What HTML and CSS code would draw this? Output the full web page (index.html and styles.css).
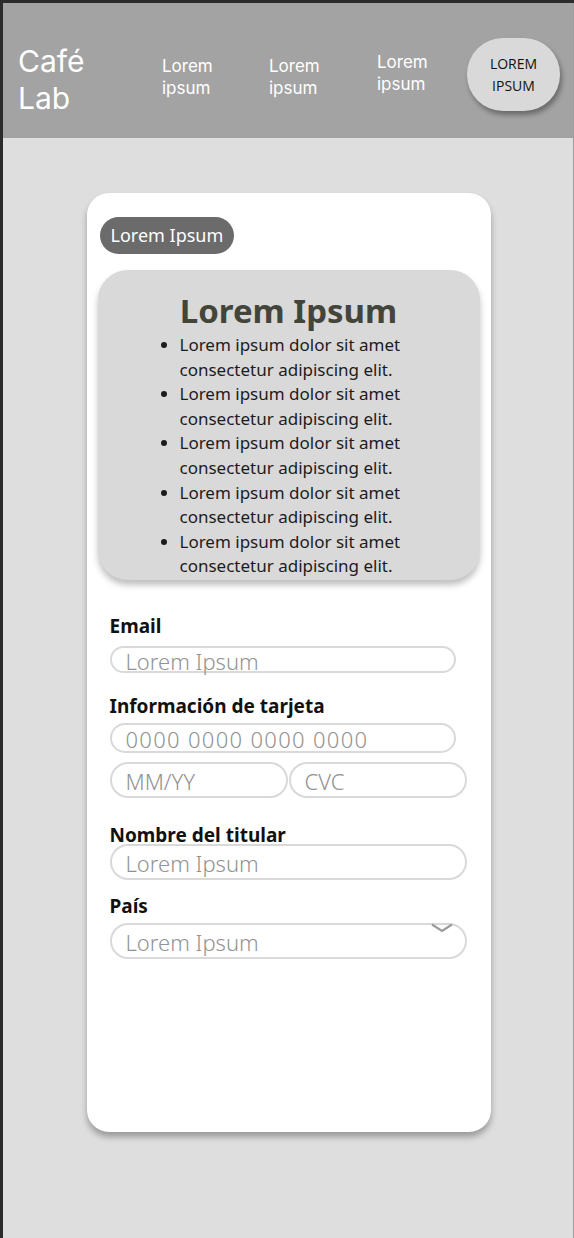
FILE: index.html
```html
<!DOCTYPE html>
<html lang="es">
<head>
<meta charset="utf-8">
<title>Café Lab</title>
<link rel="stylesheet" href="styles.css">
</head>
<body>
<div class="frame">
  <header class="topbar">
    <div class="logo">Café<br>Lab</div>
    <nav class="nav">
      <a class="nav-item w1">Lorem<br>ipsum</a>
      <a class="nav-item w2">Lorem<br>ipsum</a>
      <a class="nav-item w3 raised">Lorem<br>ipsum</a>
    </nav>
    <button class="cta">LOREM<br>IPSUM</button>
  </header>

  <div class="content">
  <main class="card">
    <span class="badge">Lorem Ipsum</span>
    <section class="summary">
      <h1 class="summary-title">Lorem Ipsum</h1>
      <ul class="summary-list">
        <li>Lorem ipsum dolor sit amet<br>consectetur adipiscing elit.</li>
        <li>Lorem ipsum dolor sit amet<br>consectetur adipiscing elit.</li>
        <li>Lorem ipsum dolor sit amet<br>consectetur adipiscing elit.</li>
        <li>Lorem ipsum dolor sit amet<br>consectetur adipiscing elit.</li>
        <li>Lorem ipsum dolor sit amet<br>consectetur adipiscing elit.</li>
      </ul>
    </section>

    <form class="form">
      <label class="label l-email">Email</label>
      <div class="field f-email">Lorem Ipsum</div>

      <label class="label l-card">Información de tarjeta</label>
      <div class="field f-card">0000 0000 0000 0000</div>
      <div class="row">
        <div class="field f-half">MM/YY</div>
        <div class="field f-half">CVC</div>
      </div>

      <label class="label l-name">Nombre del titular</label>
      <div class="field f-wide">Lorem Ipsum</div>

      <label class="label l-country">País</label>
      <div class="field f-wide f-select">Lorem Ipsum
        <svg class="chevron" width="22" height="10" viewBox="0 0 22 10"><path d="M1 1.5 L11 8 L21 1.5" fill="none" stroke="#9b9b9b" stroke-width="2.2"/></svg>
      </div>
    </form>
  </main>
  </div>
</div>
</body>
</html>
```

FILE: styles.css
```css
* { box-sizing: border-box; }
html, body { margin: 0; padding: 0; }
body {
  background: #2b2b2b;
  font-family: "Noto Sans", "Lato", sans-serif;
}
.frame {
  margin: 3px 0 0 3px;
  background: #dedede;
  border-right: 1px solid #9d9d9d;
  min-height: 1235px;
  padding-bottom: 40px;
}
.topbar {
  height: 135px;
  background: #a3a3a3;
  display: flex;
  align-items: flex-start;
  padding: 0 0 0 15px;
}
.logo {
  width: 144px;
  margin-top: 40px;
  color: #ffffff;
  font-family: "Inter", sans-serif;
  font-weight: 400;
  font-size: 30px;
  line-height: 37px;
}
.nav { display: flex; align-items: flex-start; }
.nav-item {
  margin-top: 53px;
  color: #ffffff;
  font-family: "Inter", sans-serif;
  font-weight: 400;
  font-size: 17px;
  line-height: 21.5px;
  text-decoration: none;
}
.w1 { width: 107px; }
.w2 { width: 108px; }
.w3 { width: 90px; }
.nav-item.raised { margin-top: 49px; }
.cta {
  margin-top: 35px;
  width: 93px;
  height: 73px;
  border: none;
  border-radius: 36px;
  background: #d9d9d9;
  box-shadow: 2px 4px 5px rgba(0,0,0,0.35);
  font-family: "Open Sans", sans-serif;
  font-size: 14px;
  line-height: 22px;
  color: #111;
  padding: 0;
}

.content { padding-left: 1px; }
.card {
  width: 404px;
  height: 939px;
  margin: 55px auto 0;
  background: #ffffff;
  border-radius: 22px;
  box-shadow: 0 5px 6px rgba(0,0,0,0.3);
  padding: 24px 11px 0 11px;
}
.badge {
  display: inline-block;
  margin-left: 2px;
  height: 37px;
  padding: 0 11px;
  border-radius: 19px;
  background: #6b6b6b;
  color: #fff;
  font-size: 18px;
  line-height: 37px;
}
.summary {
  margin-top: 16px;
  height: 310px;
  background: #d9d9d9;
  border-radius: 30px;
  box-shadow: 0 5px 6px rgba(0,0,0,0.25);
  padding-top: 21px;
}
.summary-title {
  margin: 0;
  text-align: center;
  font-size: 33px;
  line-height: 40px;
  font-weight: 700;
  color: #44453a;
}
.summary-list {
  margin: 2px 0 0 68px;
  padding-left: 14px;
  font-size: 17px;
  line-height: 24.6px;
  color: #1c1c1c;
}

.form {
  display: flex;
  flex-direction: column;
  align-items: flex-start;
  padding-left: 12px;
}
.label {
  font-size: 19px;
  line-height: 22px;
  font-weight: 700;
  color: #111;
}
.l-email { margin-top: 35px; margin-bottom: 9px; }
.l-card { margin-top: 22px; margin-bottom: 6px; }
.l-name { margin-top: 26px; margin-bottom: -2px; }
.l-country { margin-top: 15px; margin-bottom: 6px; }
.field {
  border: 2.5px solid #d9d9d9;
  border-radius: 20px;
  padding: 2px 0 0 14px;
  font-size: 22px;
  font-weight: 300;
  color: #929292;
  display: flex;
  align-items: center;
  background: #fff;
  position: relative;
  white-space: nowrap;
}
.f-email { width: 346px; height: 27px; }
.f-card { width: 346px; height: 30px; letter-spacing: 1.3px; }
.row { display: flex; gap: 1px; margin-top: 9px; }
.f-half { width: 178px; height: 36px; }
.f-wide { width: 357px; height: 36px; }
.chevron {
  position: absolute;
  right: 12px;
  top: -2px;
}
```
